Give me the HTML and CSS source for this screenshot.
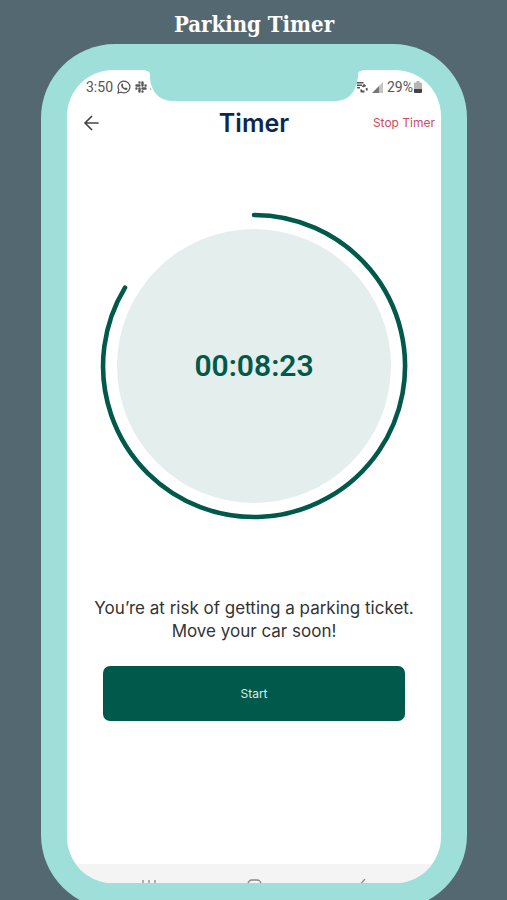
FILE: index.html
```html
<!DOCTYPE html>
<html lang="en">
<head>
<meta charset="utf-8">
<meta name="viewport" content="width=device-width, initial-scale=1">
<title>Parking Timer</title>
<link rel="stylesheet" href="styles.css">
</head>
<body>
<div class="page">
  <h1 class="page-title">Parking Timer</h1>
  <div class="phone">
    <svg class="notch" width="216" height="32" viewBox="0 0 216 32" aria-hidden="true">
      <path d="M0 0V1C3 1 4 2 4 6C4 16 9 31 27 31H189C207 31 211 16 212 6C212 2 213 1 216 1V0Z"/>
    </svg>
    <div class="screen">
      <div class="status">
        <div class="status-group">
          <span>3:50</span>
          <svg width="14" height="14" viewBox="0 0 14 14" fill="none" stroke="currentColor" aria-hidden="true">
            <path stroke-width="1.2" d="M1 13l.8-3.2A5.9 5.9 0 1 1 4.200 12.200Z"/>
            <path fill="currentColor" stroke="none" d="M4.700 3.700c.5-.4.9-.3 1.100.2l.5 1.100c.1.400-.5.800-.5 1.100.4 1 1.100 1.700 2.200 2.200.4.100.7-.8 1.100-.7l1.200.6c.5.300 0 1.200-.4 1.500-1 .7-2.600.2-4-1.100C4.300 7.100 3.500 5 4.700 3.700Z"/>
          </svg>
          <svg width="18" height="12" viewBox="0 0 18 12" fill="none" stroke="currentColor" stroke-width="2.400" stroke-linecap="round" aria-hidden="true">
            <path d="M4.500 4.500H1.500M4.500 1.400v.1M7.500 1.500v3M10.500 4.500h.1M7.500 7.500h3M7.500 10.500v.1M4.500 7.500v3M1.500 7.500h-.1"/>
            <path stroke-width="1.300" stroke="#999" d="M15.500 8h.1"/>
          </svg>
        </div>
        <div class="status-group">
          <svg width="12" height="12" viewBox="0 0 12 12" fill="none" stroke="currentColor" stroke-width="1.400" aria-hidden="true">
            <path d="M0 1.700h7.500M1 4.200h5M1 6.700h3"/>
            <path stroke-width="1.800" d="M6.500 6l1.500-2 1.500 1.500M10.500 7l.5 2.500M8.500 10.500H5.500L5 8.500"/>
          </svg>
          <svg width="11" height="11" viewBox="0 0 11 11" aria-hidden="true">
            <path fill="#c4c4c4" d="M7 4l4-4v11H7Z"/>
            <path fill="#777" d="M0 11l7-7v7Z"/>
          </svg>
          <span class="battery">29%<svg width="8" height="12" viewBox="0 0 8 12" aria-hidden="true">
            <path fill="#b5b5b5" d="M2.500 0h3v1.500H7q1 0 1 1V8H0V2.500q0-1 1-1h1.500Z"/>
            <path fill="#444" d="M0 8h8v3q0 1-1 1H1q-1 0-1-1Z"/>
          </svg></span>
        </div>
      </div>
      <header class="appbar">
        <button class="back" type="button" aria-label="Back">
          <svg width="16" height="16" viewBox="0 0 16 16" fill="none" stroke="currentColor" stroke-width="1.700" stroke-linecap="round" stroke-linejoin="round" aria-hidden="true">
            <path d="M14 8H1M7.500 1.500L1 8l6.500 6.500"/>
          </svg>
        </button>
        <h2 class="title">Timer</h2>
        <button class="stop" type="button">Stop Timer</button>
      </header>
      <main class="content">
        <div class="dial">
          <svg class="ring" viewBox="0 0 308 308" aria-hidden="true">
            <circle cx="154" cy="154" r="137" fill="#e4eeec"/>
            <path d="M154 3A151 151 0 1 1 25 75.600" fill="none" stroke="#00594a" stroke-width="4.600" stroke-linecap="round"/>
          </svg>
          <time class="time">00:08:23</time>
        </div>
        <p class="message">You’re at risk of getting a parking ticket.<br>Move your car soon!</p>
        <button class="start" type="button">Start</button>
      </main>
      <nav class="system">
        <button type="button" aria-label="Recent apps">
          <svg width="16" height="16" viewBox="0 0 16 16" fill="none" stroke="currentColor" stroke-width="1.300"><path d="M2 1v14M8 1v14M14 1v14"/></svg>
        </button>
        <button type="button" aria-label="Home">
          <svg width="16" height="16" viewBox="0 0 16 16" fill="none" stroke="currentColor" stroke-width="1.300"><rect x="2" y="1" width="13" height="13" rx="4"/></svg>
        </button>
        <button type="button" aria-label="System back">
          <svg width="16" height="16" viewBox="0 0 16 16" fill="none" stroke="currentColor" stroke-width="1.300"><path d="M14 0L7 8l7 8"/></svg>
        </button>
      </nav>
    </div>
  </div>
</div>
</body>
</html>
```
FILE: styles.css
```css
* {
  box-sizing: border-box;
}

body {
  margin: 0;
  background: #546871;
  font-family: Inter, sans-serif;
}

h1, h2, p {
  margin: 0;
}

button {
  padding: 0;
  border: 0;
  background: none;
  color: inherit;
  font: inherit;
}

svg {
  display: block;
  flex: none;
}

.page {
  height: 100vh;
  overflow: hidden;
  padding: 0 40px 0 41px;
}

.page-title {
  height: 44px;
  color: #fff;
  font: 700 22px/48px "DejaVu Serif Condensed", "DejaVu Serif", serif;
  text-align: center;
  white-space: nowrap;
}

.phone {
  position: relative;
  height: calc(100vh - 35px);
  min-height: 780px;
  padding: 26px;
  border-radius: 74px;
  background: #9fdfd9;
}

.notch {
  position: absolute;
  top: 26px;
  left: 50%;
  transform: translateX(-50%);
  fill: #9fdfd9;
}

.screen {
  display: flex;
  flex-direction: column;
  height: 100%;
  overflow: hidden;
  border-radius: 46px;
  background: #fff;
}

.status {
  display: flex;
  justify-content: space-between;
  align-items: center;
  height: 34px;
  padding: 0 19px;
  color: #555;
  font: 14px/16px Roboto, sans-serif;
}

.status-group {
  display: flex;
  align-items: center;
  gap: 4px;
}

.battery {
  display: flex;
  align-items: center;
  gap: 1px;
}

.appbar {
  display: grid;
  grid-template-columns: minmax(0, 1fr) auto minmax(0, 1fr);
  align-items: center;
  height: 38px;
  padding: 0 6px;
}

.back {
  justify-self: start;
  padding-left: 11px;
  color: #444;
}

.title {
  color: #0c2850;
  font-size: 25px;
  font-weight: 600;
  line-height: 32px;
}

.stop {
  justify-self: end;
  color: #cf4a62;
  font-size: 12px;
  line-height: 16px;
  white-space: nowrap;
}

.content {
  display: flex;
  flex: 1;
  flex-direction: column;
  align-items: center;
  padding: 70px 8px 0;
}

.dial {
  display: grid;
  place-items: center;
  width: 100%;
  max-width: 308px;
}

.ring,
.time {
  grid-area: 1 / 1;
}

.ring {
  width: 100%;
}

.time {
  color: #00594a;
  font: 600 30px/32px Roboto, sans-serif;
}

.message {
  margin-top: 77px;
  color: #333;
  font-size: 17px;
  line-height: 23px;
  text-align: center;
}

.start {
  width: calc(100% - 56px);
  height: 55px;
  margin-top: 23px;
  border-radius: 7px;
  background: #00594a;
  color: #dcebe8;
  font-size: 12px;
}

.system {
  display: flex;
  justify-content: space-between;
  align-items: flex-start;
  height: 19px;
  padding: 15px 74px 0;
  background: #f4f4f4;
  color: #888;
}
```
